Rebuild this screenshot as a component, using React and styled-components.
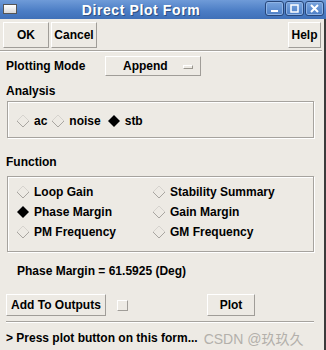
import React from "react";
import styled, { createGlobalStyle } from "styled-components";

const GlobalStyle = createGlobalStyle`
  body {
    margin: 0;
    background: #edeae4;
    font-family: "Liberation Sans", Arial, sans-serif;
  }
`;

const Window = styled.div`
  width: 326px;
  height: 350px;
  display: flex;
  flex-direction: column;
  background: #edeae4;
  overflow: hidden;
`;

const TitleBar = styled.div`
  height: 19px;
  display: flex;
  align-items: center;
  padding: 0 3px;
  background: linear-gradient(#6f9bd8, #4a7cc4 60%, #3f70b8);
  box-sizing: border-box;
`;

const WinIcon = styled.div`
  width: 12px;
  height: 8px;
  margin-top: -2px;
  border: 1px solid #555;
  background: linear-gradient(#fff, #d8d8d8);
`;

const Title = styled.div`
  flex: 1;
  text-align: center;
  color: #fff;
  font-weight: bold;
  font-size: 14px;
  letter-spacing: 0.6px;
  text-shadow: 1px 1px 0 #2c4f80;
`;

const WinButtons = styled.div`
  display: flex;
  gap: 1px;
  margin-top: -2px;
  margin-right: -1px;
`;

const WinButton = styled.div`
  width: 19px;
  height: 15px;
  box-sizing: border-box;
  border: 1px solid #27467a;
  border-radius: 3px;
  background: linear-gradient(#78a3dd, #4d7fc6);
  box-shadow: inset 0 0 0 1px #8fb4e6;
  display: flex;
  align-items: center;
  justify-content: center;
`;

const Body = styled.div`
  flex: 1;
  border-right: 2px solid #3b3b3b;
  display: flex;
  flex-direction: column;
  font-weight: bold;
  font-size: 12px;
  color: #000;
`;

const ButtonRow = styled.div`
  display: flex;
  gap: 2px;
  padding: 3px 3px 0 3px;
  height: 26px;
`;

const Button = styled.div`
  box-sizing: border-box;
  width: ${(p) => p.$w}px;
  height: ${(p) => p.$h || 26}px;
  margin-left: ${(p) => (p.$right ? "auto" : "0")};
  border-top: 1px solid #fff;
  border-left: 1px solid #fff;
  border-right: 1px solid #a09d98;
  border-bottom: 1px solid #a09d98;
  display: flex;
  align-items: center;
  justify-content: center;
  font-weight: bold;
  font-size: 12px;
`;

const Separator = styled.div`
  height: 1px;
  background: #a6a39e;
  border-bottom: 1px solid #fff;
  margin: ${(p) => p.$m};
`;

const ModeRow = styled.div`
  display: flex;
  align-items: center;
  margin-top: 4px;
  padding-left: 6px;
`;

const Label = styled.div`
  width: ${(p) => (p.$w ? p.$w + "px" : "auto")};
  height: 14px;
  line-height: 14px;
  padding-left: ${(p) => p.$pl ?? 6}px;
  margin-top: ${(p) => p.$mt ?? 0}px;
`;

const MenuButton = styled.div`
  box-sizing: border-box;
  width: 96px;
  height: 20px;
  border-top: 1px solid #fff;
  border-left: 1px solid #fff;
  border-right: 1px solid #a09d98;
  border-bottom: 1px solid #a09d98;
  display: flex;
  align-items: center;
  padding: 0 7px 0 17px;
`;

const Indicator = styled.div`
  width: 8px;
  height: 2px;
  margin-left: auto;
  border-top: 1px solid #fff;
  border-left: 1px solid #fff;
  border-right: 1px solid #9a978f;
  border-bottom: 1px solid #9a978f;
  margin-top: 1px;
`;

const Group = styled.div`
  box-sizing: border-box;
  margin: ${(p) => p.$mt}px 10px 0 7px;
  height: ${(p) => p.$h}px;
  border: 1px solid #a6a39e;
  box-shadow: 1px 1px 0 #fff, inset 1px 1px 0 #fff;
  padding: ${(p) => p.$pad};
  display: grid;
  grid-template-columns: ${(p) => p.$cols};
  row-gap: 6px;
  align-content: start;
`;

const Radio = styled.div`
  display: flex;
  align-items: center;
  gap: 4px;
  height: 14px;
`;

const Result = styled.div`
  padding-left: 17px;
  margin-top: 12px;
  height: 14px;
  line-height: 14px;
`;

const BottomRow = styled.div`
  display: flex;
  align-items: center;
  margin-top: 16px;
  padding-left: 6px;
`;

const Check = styled.div`
  width: 11px;
  height: 11px;
  box-sizing: border-box;
  margin: 0 79px 0 11px;
  border-top: 1px solid #fff;
  border-left: 1px solid #fff;
  border-right: 1px solid #a09d98;
  border-bottom: 1px solid #a09d98;
`;

const Status = styled.div`
  display: flex;
  align-items: center;
  padding-left: 6px;
  margin-top: 7px;
  height: 16px;
  white-space: nowrap;
`;

const Watermark = styled.span`
  font-weight: normal;
  font-size: 14px;
  color: #b3b0ab;
  margin-left: 6px;
  font-family: "Liberation Sans", "Noto Sans CJK SC", sans-serif;
`;

const Diamond = ({ on }) => (
  <svg width="14" height="14" viewBox="0 0 14 14">
    {on ? (
      <>
        <polygon points="7,1 13,7 7,13 1,7" fill="#000" />
        <polyline points="1,7 7,1 13,7" fill="none" stroke="#777" strokeWidth="1" />
      </>
    ) : (
      <>
        <polyline points="1,7 7,1 13,7" fill="none" stroke="#d6d3ce" strokeWidth="1" />
        <polyline points="1,7 7,13 13,7" fill="none" stroke="#a8a5a0" strokeWidth="1" />
      </>
    )}
  </svg>
);

const Opt = ({ on, children, mr }) => (
  <Radio style={mr ? { marginRight: mr } : undefined}>
    <Diamond on={on} />
    <span>{children}</span>
  </Radio>
);

export default function App() {
  return (
    <>
      <GlobalStyle />
      <Window>
        <TitleBar>
          <WinIcon />
          <Title>Direct Plot Form</Title>
          <WinButtons>
            <WinButton>
              <svg width="9" height="9" viewBox="0 0 9 9">
                <rect x="1" y="6" width="7" height="2" fill="#fff" />
              </svg>
            </WinButton>
            <WinButton>
              <svg width="9" height="9" viewBox="0 0 9 9">
                <rect x="1" y="1" width="7" height="7" fill="none" stroke="#fff" strokeWidth="1.5" />
              </svg>
            </WinButton>
            <WinButton>
              <svg width="9" height="9" viewBox="0 0 9 9">
                <path d="M1 1 L8 8 M8 1 L1 8" stroke="#fff" strokeWidth="2" />
              </svg>
            </WinButton>
          </WinButtons>
        </TitleBar>
        <Body>
          <ButtonRow>
            <Button $w={46}>OK</Button>
            <Button $w={46}>Cancel</Button>
            <Button $w={33} $right>Help</Button>
          </ButtonRow>
          <Separator $m="2px 2px 0 0" />
          <ModeRow>
            <Label $w={99} $pl={0}>Plotting Mode</Label>
            <MenuButton>
              <span>Append</span>
              <Indicator />
            </MenuButton>
          </ModeRow>
          <Label $mt={8}>Analysis</Label>
          <Group $mt={3} $h={37} $pad="12px 0 0 8px" $cols="auto auto 1fr">
            <Opt mr={4}>ac</Opt>
            <Opt mr={6}>noise</Opt>
            <Opt on>stb</Opt>
          </Group>
          <Label $mt={17}>Function</Label>
          <Group $mt={7} $h={76} $pad="8px 0 0 8px" $cols="136px 1fr">
            <Opt>Loop Gain</Opt>
            <Opt>Stability Summary</Opt>
            <Opt on>Phase Margin</Opt>
            <Opt>Gain Margin</Opt>
            <Opt>PM Frequency</Opt>
            <Opt>GM Frequency</Opt>
          </Group>
          <Result>Phase Margin = 61.5925 (Deg)</Result>
          <BottomRow>
            <Button $w={100} $h={22}>Add To Outputs</Button>
            <Check />
            <Button $w={48} $h={22}>Plot</Button>
          </BottomRow>
          <Separator $m="5px 10px 0 6px" />
          <Status>
            &gt; Press plot button on this form...
            <Watermark>CSDN @玖玖久</Watermark>
          </Status>
        </Body>
      </Window>
    </>
  );
}
